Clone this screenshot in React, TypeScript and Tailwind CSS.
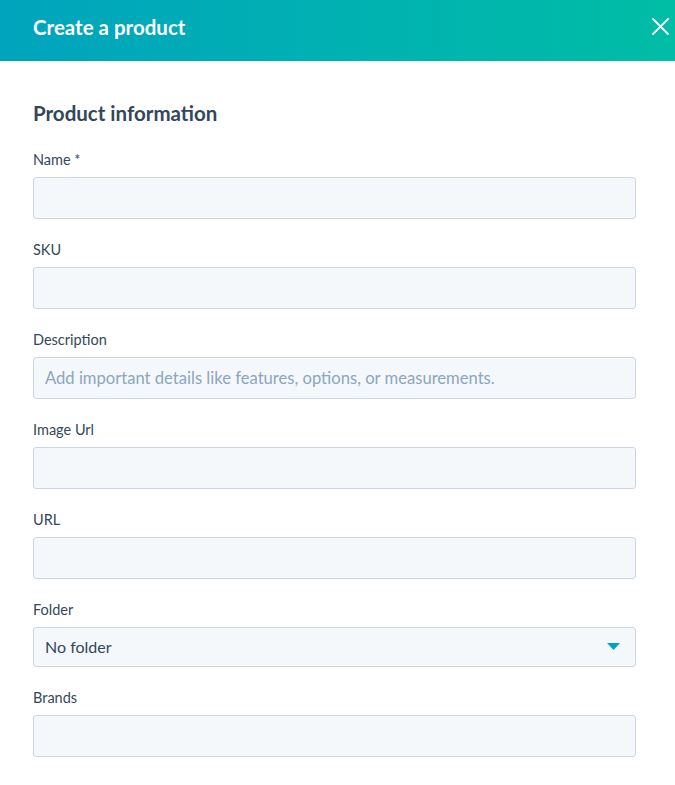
const fields = [
  { label: "Name *" },
  { label: "SKU" },
  { label: "Description", placeholder: "Add important details like features, options, or measurements." },
  { label: "Image Url" },
  { label: "URL" },
];

export default function App() {
  return (
    <div className="w-[675px] min-h-[785px] bg-white text-[#33475b] font-['Lato',sans-serif]">
      <div className="h-[61px] pb-[6px] flex items-center justify-between pl-[33px] pr-[6px] bg-gradient-to-r from-[#00a4bd] to-[#00bda5]">
        <h1 className="text-[20.5px] font-bold text-white">Create a product</h1>
        <button type="button" className="-mt-[3px]">
          <svg width="17" height="17" viewBox="0 0 17 17">
            <path d="M1 1L16 16M16 1L1 16" stroke="#fff" strokeWidth="1.8" strokeLinecap="round" />
          </svg>
        </button>
      </div>

      <div className="px-[33px] pt-[40px] pr-[39px]">
        <h2 className="text-[20.5px] leading-[24px] font-bold mb-[25px]">Product information</h2>

        <div className="flex flex-col gap-[21px]">
          {fields.map((f) => (
            <div key={f.label}>
              <label className="block text-[14.5px] leading-[20px] mb-[7px]">{f.label}</label>
              <input
                type="text"
                placeholder={f.placeholder}
                className="w-full h-[42px] px-[11px] bg-[#f5f8fa] border border-[#cbd6e2] rounded-[3px] text-[16.6px] placeholder:text-[#8da5bf] outline-none"
              />
            </div>
          ))}

          <div>
            <label className="block text-[14.5px] leading-[20px] mb-[7px]">Folder</label>
            <div className="w-full h-[40px] px-[11px] bg-[#f5f8fa] border border-[#cbd6e2] rounded-[3px] flex items-center justify-between">
              <span className="text-[16px]">No folder</span>
              <svg width="13" height="8" viewBox="0 0 13 8" className="mr-[4px]">
                <path d="M0 0h13L6.5 7z" fill="#00a4bd" />
              </svg>
            </div>
          </div>

          <div>
            <label className="block text-[14.5px] leading-[20px] mb-[7px]">Brands</label>
            <input
              type="text"
              className="w-full h-[42px] px-[11px] bg-[#f5f8fa] border border-[#cbd6e2] rounded-[3px] text-[16px] outline-none"
            />
          </div>
        </div>
      </div>
    </div>
  );
}
